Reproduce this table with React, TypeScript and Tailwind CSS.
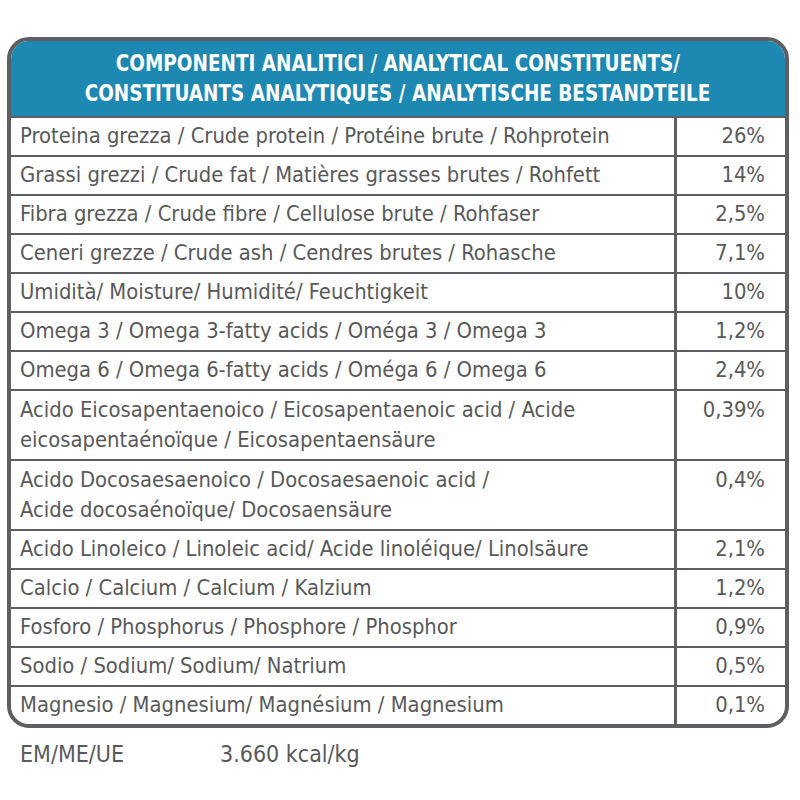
import React from "react";

const rows: { label: string[]; value: string }[] = [
  { label: ["Proteina grezza / Crude protein / Protéine brute / Rohprotein"], value: "26%" },
  { label: ["Grassi grezzi / Crude fat / Matières grasses brutes / Rohfett"], value: "14%" },
  { label: ["Fibra grezza / Crude fibre / Cellulose brute / Rohfaser"], value: "2,5%" },
  { label: ["Ceneri grezze / Crude ash / Cendres brutes / Rohasche"], value: "7,1%" },
  { label: ["Umidità/ Moisture/ Humidité/ Feuchtigkeit"], value: "10%" },
  { label: ["Omega 3 / Omega 3-fatty acids / Oméga 3 / Omega 3"], value: "1,2%" },
  { label: ["Omega 6 / Omega 6-fatty acids / Oméga 6 / Omega 6"], value: "2,4%" },
  {
    label: [
      "Acido Eicosapentaenoico / Eicosapentaenoic acid / Acide",
      "eicosapentaénoïque / Eicosapentaensäure",
    ],
    value: "0,39%",
  },
  {
    label: ["Acido Docosaesaenoico / Docosaesaenoic acid /", "Acide docosaénoïque/ Docosaensäure"],
    value: "0,4%",
  },
  { label: ["Acido Linoleico / Linoleic acid/ Acide linoléique/ Linolsäure"], value: "2,1%" },
  { label: ["Calcio / Calcium / Calcium / Kalzium"], value: "1,2%" },
  { label: ["Fosforo / Phosphorus / Phosphore / Phosphor"], value: "0,9%" },
  { label: ["Sodio / Sodium/ Sodium/ Natrium"], value: "0,5%" },
  { label: ["Magnesio / Magnesium/ Magnésium / Magnesium"], value: "0,1%" },
];

export default function App() {
  const font = { fontFamily: '"DejaVu Sans Condensed", "DejaVu Sans", sans-serif' };
  return (
    <div className="w-[800px] h-[800px] bg-white pt-[37px] pl-[7px]" style={font}>
      <div className="w-[782px] border-4 border-[#5e5f62] rounded-[22px] overflow-hidden">
        <div className="h-[75px] bg-[#1d88b2] flex flex-col items-center justify-center text-white font-bold text-[23px] leading-[30px] pb-[2px]">
          <div className="whitespace-nowrap scale-x-[0.89]">COMPONENTI ANALITICI / ANALYTICAL CONSTITUENTS/</div>
          <div className="whitespace-nowrap scale-x-[0.89]">CONSTITUANTS ANALYTIQUES / ANALYTISCHE BESTANDTEILE</div>
        </div>
        {rows.map((r, i) => {
          const dbl = r.label.length > 1;
          return (
            <div
              key={i}
              className={`grid grid-cols-[663px_1fr] border-t-2 border-[#5e5f62] text-[#58595b] text-[21.8px] ${dbl ? "h-[70px]" : "h-[39px]"}`}
            >
              <div className={`pl-[9px] leading-[30px] ${dbl ? "pt-[4px]" : "pt-[3px]"}`}>
                {r.label.map((l, j) => (
                  <div key={j} className="whitespace-nowrap">{l}</div>
                ))}
              </div>
              <div className={`border-l-[3px] border-[#5e5f62] text-right pr-[20px] leading-[30px] ${dbl ? "pt-[4px]" : "pt-[3px]"}`}>
                {r.value}
              </div>
            </div>
          );
        })}
      </div>
      <div className="flex text-[#58595b] text-[23px] pt-[9px] pl-[13px]">
        <div className="w-[200px]">EM/ME/UE</div>
        <div>3.660 kcal/kg</div>
      </div>
    </div>
  );
}
